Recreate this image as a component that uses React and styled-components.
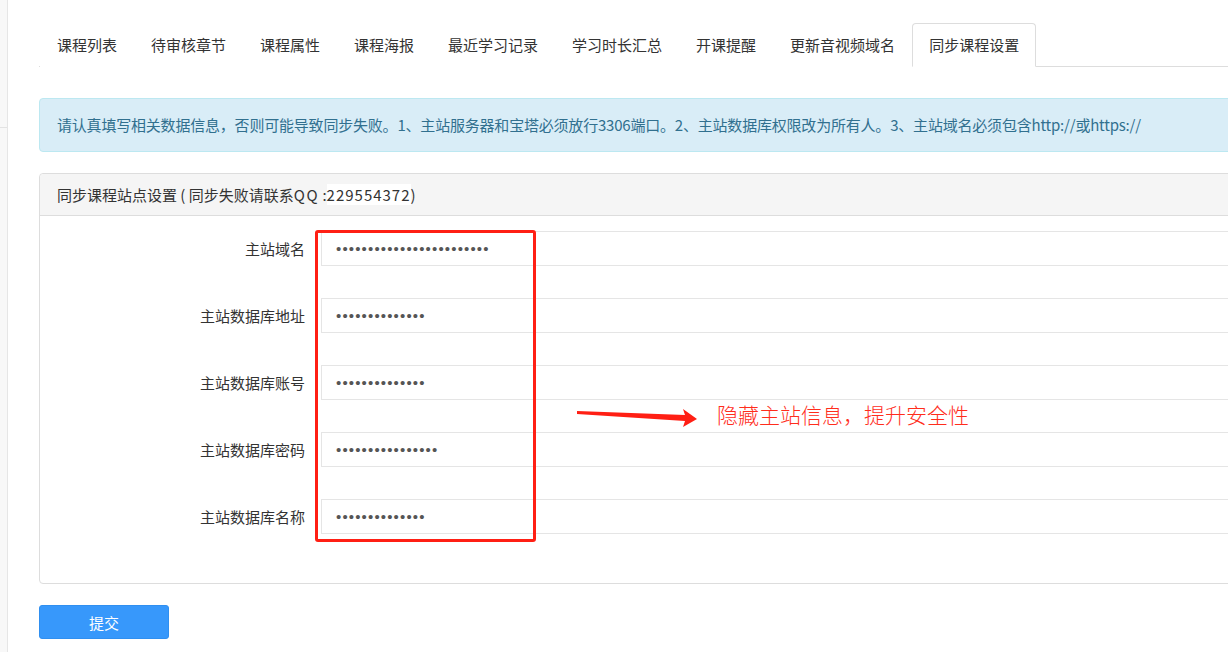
import React from 'react';
import styled, { createGlobalStyle } from 'styled-components';

const GlobalStyle = createGlobalStyle`
    html, body {
        margin: 0;
        padding: 0;
        background: #fff;
        overflow: hidden;
    }
    body {
        font-family: "Noto Sans CJK SC", "Noto Sans", sans-serif;
        font-size: 15px;
        color: #333;
    }
`;

const Page = styled.div`
    display: flex;
    min-height: 652px;
`;

const Sidebar = styled.div`
    flex: 0 0 7px;
    background: #f8f8f8;
    border-right: 1px solid #e6e6e6;
`;

const SideItem = styled.div`
    height: 127px;
    border-bottom: 1px solid #e3e3e3;
`;

const Main = styled.div`
    flex: 0 0 1400px;
    padding: 23px 0 0 31px;
`;

const Tabs = styled.ul`
    display: flex;
    margin: 0;
    padding: 0 0 0 1px;
    list-style: none;
    border-bottom: 1px solid #ddd;
`;

const Tab = styled.li`
    height: 42px;
    padding: 0 16px;
    line-height: 42px;
    color: #333;
    white-space: nowrap;
    border: 1px solid ${(p) => (p.active ? '#ddd' : 'transparent')};
    border-bottom-color: ${(p) => (p.active ? '#fff' : 'transparent')};
    border-radius: 4px 4px 0 0;
    background: #fff;
    margin-bottom: -1px;
`;

const Alert = styled.div`
    margin-top: 31px;
    height: 52px;
    padding: 0 17px;
    line-height: 52px;
    background: #d9edf7;
    border: 1px solid #bce8f1;
    border-radius: 4px;
    color: #31708f;
    letter-spacing: -0.2px;
    white-space: nowrap;
`;

const Panel = styled.div`
    margin-top: 21px;
    border: 1px solid #ddd;
    border-radius: 4px;
    background: #fff;
`;

const PanelHeading = styled.div`
    height: 41px;
    padding: 0 17px;
    line-height: 41px;
    background: #f5f5f5;
    border-bottom: 1px solid #ddd;
    border-radius: 4px 4px 0 0;
    color: #333;
    white-space: nowrap;
`;

const Wide = styled.span`
    letter-spacing: ${(p) => p.spacing || '1px'};
    background: ${(p) => p.bg || 'transparent'};
`;

const PanelBody = styled.div`
    position: relative;
    padding: 15px 0 49px;
    display: flex;
    flex-direction: column;
    gap: 32px;
`;

const FormRow = styled.div`
    display: grid;
    grid-template-columns: 265px 1fr;
    column-gap: 16px;
    align-items: center;
`;

const Label = styled.label`
    text-align: right;
    color: #333;
    white-space: nowrap;
`;

const Input = styled.input`
    box-sizing: border-box;
    height: 35px;
    width: 100%;
    padding: 0 14px;
    border: 1px solid #e5e5e5;
    outline: none;
    font-family: "Liberation Sans", sans-serif;
    font-size: 15px;
    letter-spacing: 1.15px;
    color: #555;
    background: #fff;
`;

const RedBox = styled.div`
    position: absolute;
    left: 275px;
    top: 14px;
    width: 221px;
    height: 312px;
    box-sizing: border-box;
    border: 3px solid #ff1f14;
    border-radius: 3px;
    pointer-events: none;
`;

const Arrow = styled.svg`
    position: absolute;
    left: 536px;
    top: 184px;
`;

const Note = styled.div`
    position: absolute;
    left: 677px;
    top: 184px;
    font-size: 21px;
    font-weight: 300;
    line-height: 28px;
    color: #ff2d1c;
    white-space: nowrap;
`;

const SubmitButton = styled.button`
    margin-top: 21px;
    width: 130px;
    height: 34px;
    border: 1px solid #2f8ff0;
    border-radius: 3px;
    background: #3798fb;
    color: #fff;
    font-family: inherit;
    font-size: 15px;
`;

const tabs = [
    '课程列表',
    '待审核章节',
    '课程属性',
    '课程海报',
    '最近学习记录',
    '学习时长汇总',
    '开课提醒',
    '更新音视频域名',
    '同步课程设置',
];

const fields = [
    { label: '主站域名', len: 24 },
    { label: '主站数据库地址', len: 14 },
    { label: '主站数据库账号', len: 14 },
    { label: '主站数据库密码', len: 16 },
    { label: '主站数据库名称', len: 14 },
];

const App = () => {
    return (
        <Page>
            <GlobalStyle />
            <Sidebar>
                <SideItem />
            </Sidebar>
            <Main>
                <Tabs>
                    {tabs.map((t, i) => (
                        <Tab key={t} active={i === tabs.length - 1}>
                            {t}
                        </Tab>
                    ))}
                </Tabs>
                <Alert>
                    请认真填写相关数据信息，否则可能导致同步失败。1、主站服务器和宝塔必须放行3306端口。2、主站数据库权限改为所有人。3、主站域名必须包含http://或https://
                </Alert>
                <Panel>
                    <PanelHeading>
                        同步课程站点设置 ( 同步失败请联系<Wide spacing="1.5px">QQ</Wide> :
                        <Wide bg="#fff">229554372</Wide>)
                    </PanelHeading>
                    <PanelBody>
                        {fields.map((f) => (
                            <FormRow key={f.label}>
                                <Label>{f.label}</Label>
                                <Input
                                    type="password"
                                    readOnly
                                    defaultValue={'x'.repeat(f.len)}
                                />
                            </FormRow>
                        ))}
                        <RedBox />
                        <Arrow width="125" height="30" viewBox="0 0 125 30">
                            <polygon
                                points="1,11 109,15 107,9 121,19 107,27 109,21 1,14"
                                fill="#ff1f14"
                            />
                        </Arrow>
                        <Note>隐藏主站信息，提升安全性</Note>
                    </PanelBody>
                </Panel>
                <SubmitButton>提交</SubmitButton>
            </Main>
        </Page>
    );
};

export default App;
